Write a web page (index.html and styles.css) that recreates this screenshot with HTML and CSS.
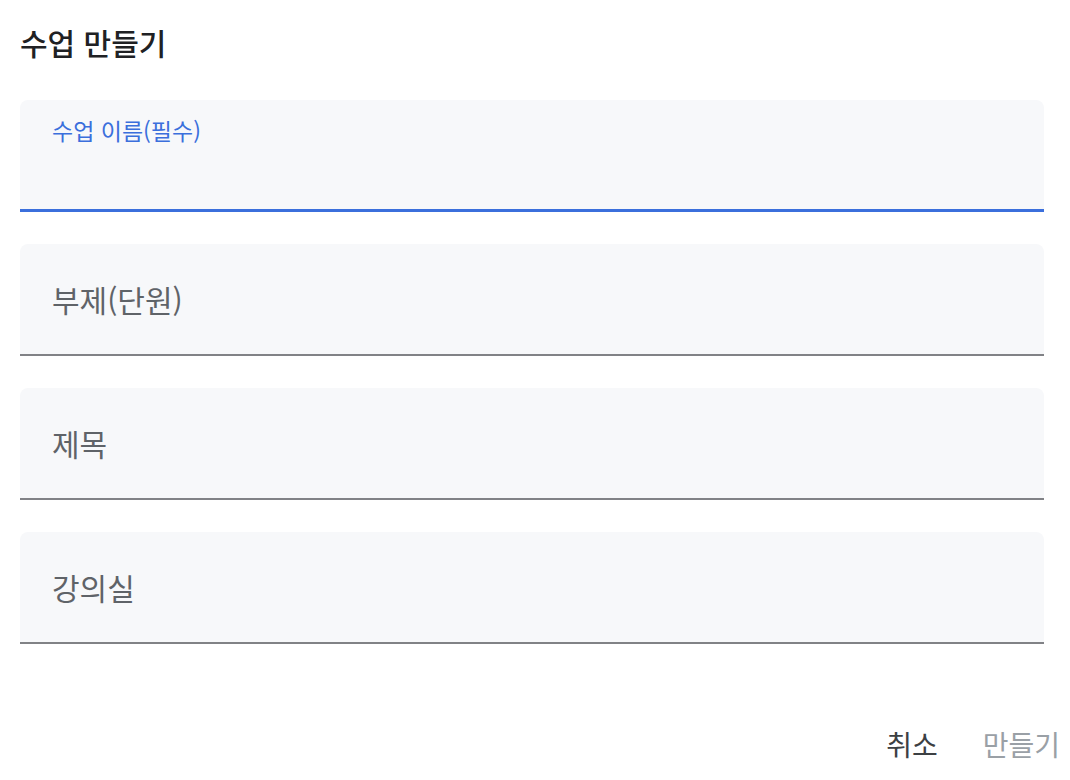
FILE: index.html
```html
<!DOCTYPE html>
<html lang="ko">
<head>
<meta charset="utf-8">
<title>수업 만들기</title>
<link rel="stylesheet" href="styles.css">
</head>
<body>
<div class="dialog">
  <h1 class="title">수업 만들기</h1>
  <div class="fields">
    <div class="field field-active">
      <span class="label-float">수업 이름(필수)</span>
    </div>
    <div class="field">
      <span class="placeholder">부제(단원)</span>
    </div>
    <div class="field">
      <span class="placeholder">제목</span>
    </div>
    <div class="field">
      <span class="placeholder">강의실</span>
    </div>
  </div>
  <div class="actions">
    <button class="btn btn-cancel">취소</button>
    <button class="btn btn-create">만들기</button>
  </div>
</div>
</body>
</html>
```
FILE: styles.css
```css
html, body {
  margin: 0;
  padding: 0;
  background: #ffffff;
}
body {
  font-family: "Noto Sans CJK KR", "Noto Sans", sans-serif;
  width: 1070px;
  height: 780px;
  overflow: hidden;
}
.dialog {
  padding: 0 26px 0 20px;
}
.title {
  margin: 0;
  padding-top: 24px;
  line-height: 36px;
  height: 36px;
  font-size: 30px;
  font-weight: 500;
  color: #202124;
  margin-bottom: 40px;
}
.fields {
  display: flex;
  flex-direction: column;
  gap: 32px;
}
.field {
  height: 110px;
  background: #f7f8fa;
  border-radius: 8px 8px 0 0;
  border-bottom: 2px solid #818286;
  padding: 0 32px;
  display: flex;
  align-items: center;
}
.field-active {
  height: 109px;
  border-bottom: 3px solid #3b6fdc;
  align-items: flex-start;
}
.label-float {
  margin-top: 14px;
  font-size: 23px;
  line-height: 32px;
  color: #3b6fdc;
}
.placeholder {
  font-size: 30px;
  color: #5f6368;
  line-height: 40px;
}
.actions {
  display: flex;
  justify-content: flex-end;
  margin-top: 80px;
  margin-right: -16px;
  gap: 45px;
}
.btn {
  font-family: inherit;
  background: none;
  border: none;
  padding: 0;
  font-size: 28px;
  line-height: 40px;
  cursor: pointer;
}
.btn-cancel {
  color: #3c4043;
}
.btn-create {
  color: #9aa0a6;
}
```
